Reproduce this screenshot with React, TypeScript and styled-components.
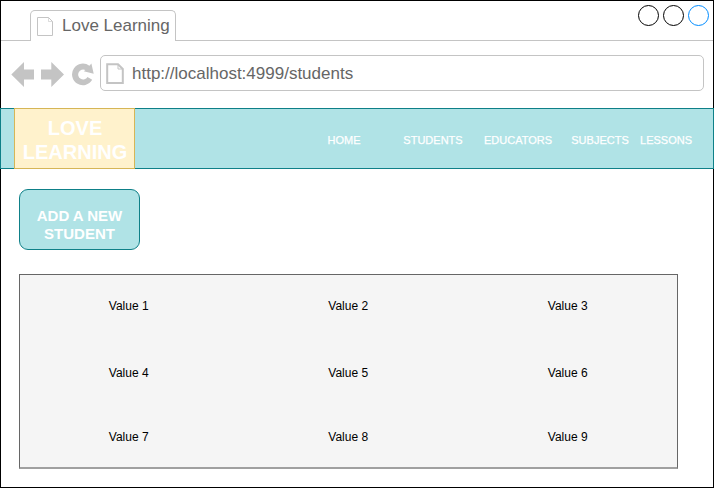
import React from "react";
import styled, { createGlobalStyle } from "styled-components";

const GlobalStyle = createGlobalStyle`
  * { box-sizing: border-box; }
  body { margin: 0; background: #fff; }
  svg { display: block; }
`;

const line = "#c4c4c4";
const teal = "#0e8088";
const aqua = "#b0e3e6";

const Window = styled.div`
  width: 714px;
  height: 488px;
  display: flex;
  flex-direction: column;
  border: 1px solid #000;
  background: #fff;
  font-family: "Liberation Sans", Arial, Helvetica, sans-serif;
  white-space: nowrap;
`;

const TabStrip = styled.header`
  display: flex;
  height: 40px;
`;

const StripEdge = styled.div`
  width: 29px;
  border-bottom: 1px solid ${line};
`;

const StripRest = styled.div`
  flex: 1;
  display: flex;
  justify-content: flex-end;
  padding: 4px 4px 0 0;
  gap: 4px;
  border-bottom: 1px solid ${line};
`;

const Tab = styled.div`
  width: 146px;
  height: 31px;
  margin-top: 9px;
  padding-left: 6px;
  display: flex;
  border: 1px solid ${line};
  border-bottom: 0;
  border-radius: 5px 5px 0 0;

  svg { margin-top: 5px; }
`;

const TabTitle = styled.span`
  margin-left: 8px;
  font-size: 17px;
  line-height: 30px;
  color: #666;
`;

const WindowButton = styled.span<{ $color: string }>`
  width: 21px;
  height: 21px;
  border: 1px solid ${(p) => p.$color};
  border-radius: 50%;
`;

const Toolbar = styled.div`
  display: flex;
  height: 67px;
  padding: 14px 9px 0 10px;
`;

const NavIcons = styled.div`
  width: 89px;
  padding-top: 6px;
`;

const AddressBar = styled.div`
  flex: 1;
  height: 36px;
  display: flex;
  padding-left: 5px;
  border: 1px solid ${line};
  border-radius: 5px;

  svg { margin-top: 7px; }
`;

const Address = styled.span`
  margin-left: 6px;
  font-size: 17px;
  line-height: 35px;
  color: #666;
`;

const NavBar = styled.nav`
  display: flex;
  width: 714px;
  height: 61px;
  flex: none;
  margin-left: -1px;
  padding-left: 13px;
  background: ${aqua};
  border: 1px solid ${teal};
`;

const Brand = styled.div`
  width: 121px;
  height: 61px;
  margin-top: -1px;
  padding: 7px 0 0 1px;
  background: #fff2cc;
  border: 1px solid #d6b656;
  color: #fff;
  font-size: 20px;
  font-weight: bold;
  line-height: 24px;
  text-align: center;
`;

const NavLinks = styled.div`
  display: grid;
  grid-template-columns: 80px 98px 72px 92px 40px;
  margin-left: 169px;
`;

const NavLink = styled.a`
  display: flex;
  justify-content: center;
  font-size: 11px;
  line-height: 63px;
  color: #fff;
  -webkit-text-stroke: 0.25px #fff;
`;

const Content = styled.main`
  padding: 20px 0 0 18px;
`;

const AddButton = styled.button`
  display: block;
  width: 121px;
  height: 61px;
  padding: 11px 0 0;
  border: 1px solid ${teal};
  border-radius: 9px;
  background: ${aqua};
  color: #fff;
  font: bold 15px/18px "Liberation Sans", Arial, sans-serif;
  text-align: center;
`;

const ValueGrid = styled.div`
  display: grid;
  grid-template-columns: repeat(3, 219.5px);
  grid-template-rows: 62px 72px 56px;
  width: 659px;
  height: 195px;
  margin-top: 24px;
  background: #f5f5f5;
  border: 1px solid #666;
  border-bottom: 2px solid #a0a0a0;
`;

const Value = styled.div`
  display: flex;
  align-items: center;
  justify-content: center;
  padding-right: 2px;
  font-size: 12px;
  color: #000;
`;

const TabPageIcon = () => (
  <svg width="17" height="20" viewBox="0 0 17 20" fill="none" stroke={line}>
    <path d="M.5 1.5H11.5L15.5 5.5V19.5H.5Z" />
    <path d="M11.5 1.5V5.5H15.5" strokeWidth=".6" />
  </svg>
);

const AddressPageIcon = () => (
  <svg width="20" height="22" viewBox="0 0 20 22" fill="none" stroke={line} strokeWidth="2">
    <path d="M1.2 1.2H12L16.8 6V20H1.2Z" />
    <path d="M12 1.2V6H16.8" strokeWidth="1" />
  </svg>
);

const BrowserIcons = () => (
  <svg width="84" height="28" viewBox="11 61 84 28" fill={line}>
    <path d="M11.3 74.5L24 62V69.5H34V79.5H24V87Z" />
    <path d="M64 74.5L51.3 62V69.5H41V79.5H51.3V87Z" />
    <path d="M92.2 79.8A10.8 10.8 0 1 1 89.4 65.8L91.4 63.6L93.7 73.8L83.8 71.3L85.4 70A5 5 0 1 0 87.5 77Z" />
  </svg>
);

const links = ["HOME", "STUDENTS", "EDUCATORS", "SUBJECTS", "LESSONS"];
const windowButtons = ["#000", "#000", "#008cff"];

export default function App() {
  return (
    <>
      <GlobalStyle />
      <Window>
        <TabStrip>
          <StripEdge />
          <Tab>
            <TabPageIcon />
            <TabTitle>Love Learning</TabTitle>
          </Tab>
          <StripRest>
            {windowButtons.map((color, i) => (
              <WindowButton key={i} $color={color} />
            ))}
          </StripRest>
        </TabStrip>
        <Toolbar>
          <NavIcons>
            <BrowserIcons />
          </NavIcons>
          <AddressBar>
            <AddressPageIcon />
            <Address>http://localhost:4999/students</Address>
          </AddressBar>
        </Toolbar>
        <NavBar>
          <Brand>
            LOVE
            <br />
            LEARNING
          </Brand>
          <NavLinks>
            {links.map((label) => (
              <NavLink key={label}>{label}</NavLink>
            ))}
          </NavLinks>
        </NavBar>
        <Content>
          <AddButton>
            ADD A NEW
            <br />
            STUDENT
          </AddButton>
          <ValueGrid>
            {Array.from({ length: 9 }, (_, i) => (
              <Value key={i}>Value {i + 1}</Value>
            ))}
          </ValueGrid>
        </Content>
      </Window>
    </>
  );
}
